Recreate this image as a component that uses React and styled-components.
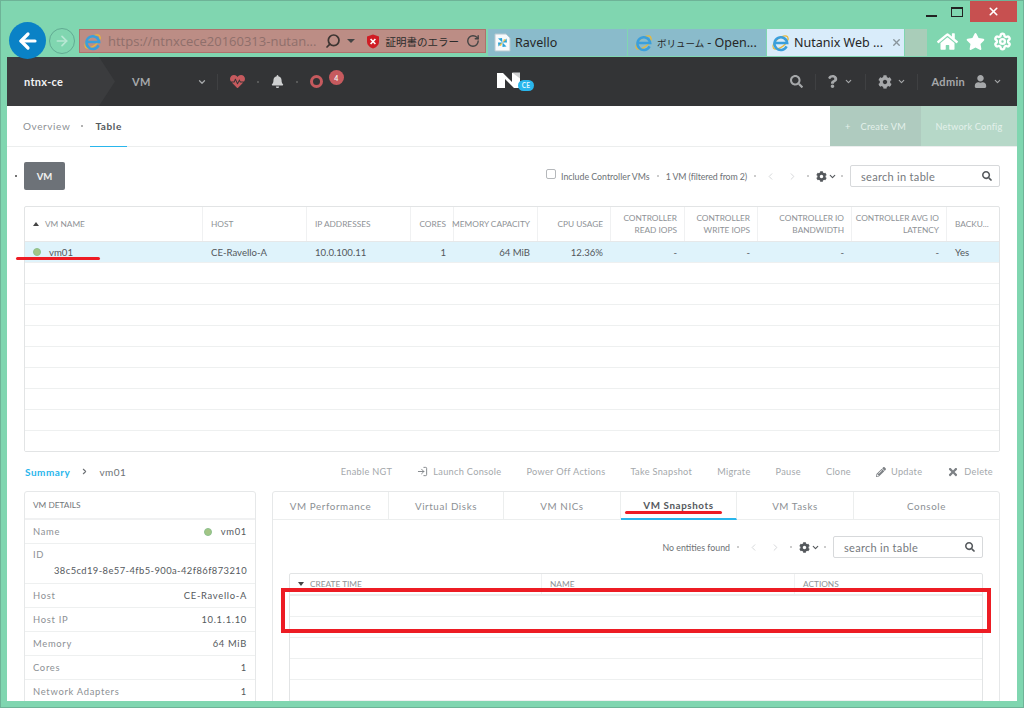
import React from "react";
import styled, { createGlobalStyle } from "styled-components";
import { FaSearch, FaQuestion, FaCog, FaUser, FaBell, FaHeartbeat, FaPencilAlt, FaTimes, FaHome, FaStar } from "react-icons/fa";
import { ChevronDown, ChevronLeft, ChevronRight, ArrowLeft, ArrowRight, RotateCw, X, LogIn, Search, Settings } from "lucide-react";

const GlobalStyle = createGlobalStyle`
  html, body { margin: 0; padding: 0; }
  body { font-family: "Lato", "Open Sans", sans-serif; background: #80d6b0; }
  * { box-sizing: border-box; }
`;

const Frame = styled.div`
  position: relative;
  width: 1024px;
  height: 708px;
  background: #80d6b0;
  border: 1px solid #6eb397;
  overflow: hidden;
`;
const Chrome = styled.div`
  height: 56px;
`;
const WindowButtons = styled.div`
  height: 21px;
  display: flex;
  justify-content: flex-end;
  align-items: stretch;
  padding-right: 6px;
`;
const WinButton = styled.div`
  width: ${props => props.$close ? "47px" : "26px"};
  background: ${props => props.$close ? "#c75050" : "transparent"};
  color: #fff;
  display: flex;
  align-items: center;
  justify-content: center;
`;
const MinGlyph = styled.span`
  width: 11px;
  height: 2px;
  background: #222;
  margin-top: 8px;
`;
const MaxGlyph = styled.span`
  width: 12px;
  height: 10px;
  border: 1px solid #222;
  border-top-width: 2px;
`;
const NavRow = styled.div`
  height: 35px;
  display: flex;
  align-items: flex-start;
  padding-left: 8px;
`;
const BackButton = styled.div`
  width: 37px;
  height: 37px;
  flex-shrink: 0;
  border-radius: 50%;
  background: #0a82c6;
  color: #fff;
  display: flex;
  align-items: center;
  justify-content: center;
  z-index: 2;
`;
const ForwardButton = styled.div`
  width: 26px;
  height: 26px;
  flex-shrink: 0;
  margin: 6px 4px 0 3px;
  border-radius: 50%;
  border: 1px solid #62ab93;
  color: #b8e8d4;
  display: flex;
  align-items: center;
  justify-content: center;
`;
const AddressBar = styled.div`
  width: 407px;
  height: 24px;
  margin-top: 7px;
  display: flex;
  align-items: center;
  padding: 0 5px 0 3px;
  background: #bc8d85;
  border: 1px solid #b0716c;
  color: #8f6f6b;
  font-family: "Open Sans", sans-serif;
  font-size: 13px;
  white-space: nowrap;
`;
const Url = styled.span`
  margin-left: 6px;
  width: 218px;
  overflow: hidden;
`;
const MirrorSearch = styled(Search)`
  flex-shrink: 0;
  color: #3d3532;
  transform: scaleX(-1);
`;
const CertText = styled.span`
  font-family: "Noto Sans CJK JP", sans-serif;
  font-size: 10.5px;
  color: #2b2b2b;
  margin: 0 7px 0 6px;
`;
const Caret = styled.span`
  width: 0;
  height: 0;
  margin: 0 11px 0 6px;
  border: 4px solid transparent;
  border-top: 4px solid #444;
  border-bottom: 0;
`;
const Tabs = styled.div`
  display: flex;
  height: 27px;
  margin-top: 7px;
  margin-left: 2px;
  gap: 1px;
`;
const BrowserTab = styled.div`
  width: ${props => props.$width}px;
  display: flex;
  align-items: center;
  gap: 4px;
  padding-left: ${props => props.$active ? "4px" : "6px"};
  background: ${props => props.$active ? "#d9ecfa" : "#8abbcb"};
  color: #262626;
  font-family: "Noto Sans", "Noto Sans CJK JP", sans-serif;
  font-size: 12.5px;
  white-space: nowrap;
`;
const TabCjk = styled.span`
  font-size: 9.5px;
  margin-right: 3px;
`;
const TabClose = styled.span`
  display: flex;
  margin-left: 4px;
  color: #8a959c;
`;
const NewTab = styled.div`
  width: 22px;
  background: #a9cdb9;
`;
const BrowserTools = styled.div`
  display: flex;
  align-items: center;
  gap: 8px;
  height: 27px;
  margin: 6px 0 0 10px;
  color: #fff;
`;
const Main = styled.div`
  margin: 0 6px;
  height: 644px;
  background: #fff;
  overflow: hidden;
`;
const TopBar = styled.div`
  height: 49px;
  display: flex;
  align-items: center;
  background: #333436;
  color: #a6a8aa;
  font-size: 11px;
  font-weight: 700;
  letter-spacing: .3px;
  position: relative;
`;
const ClusterName = styled.div`
  width: 108px;
  height: 100%;
  display: flex;
  align-items: center;
  padding-left: 17px;
  color: #f2f2f2;
  background: #3b3c3e;
  clip-path: polygon(0 0, 92px 0, 108px 50%, 92px 100%, 0 100%);
`;
const TopGroup = styled.div`
  display: flex;
  align-items: center;
  height: 100%;
  gap: ${props => props.$gap || 0}px;
  margin-left: ${props => props.$right ? "auto" : "0"};
  padding-right: ${props => props.$right ? "15px" : "0"};
`;
const EntityMenu = styled.span`
  margin-left: 17px;
  width: 65px;
`;
const TopDivider = styled.span`
  width: 1px;
  height: 16px;
  margin: 0 ${props => props.$right}px 0 ${props => props.$left}px;
  background: #3f4042;
`;
const MenuChevron = styled(ChevronDown)`
  margin-left: 5px;
`;
const UserIcon = styled(FaUser)`
  margin: 0 1px 0 9px;
`;
const TinyDot = styled.span`
  width: 2px;
  height: 2px;
  flex-shrink: 0;
  border-radius: 50%;
  background: ${props => props.$color || "#666"};
`;
const Ring = styled.span`
  width: 13px;
  height: 13px;
  border-radius: 50%;
  border: 3px solid #c65a5e;
`;
const Badge = styled.span`
  position: absolute;
  left: 322px;
  top: 13px;
  width: 15px;
  height: 15px;
  border-radius: 50%;
  background: #c65a5e;
  color: #eee;
  font-size: 7px;
  display: flex;
  align-items: center;
  justify-content: center;
`;
const Logo = styled.div`
  position: absolute;
  left: 490px;
  top: 15px;
`;
const SubNav = styled.div`
  height: 41px;
  display: flex;
  justify-content: space-between;
  border-bottom: 1px solid #eceeee;
`;
const SubTabs = styled.div`
  display: flex;
  align-items: stretch;
  padding-left: 16px;
  font-size: 10px;
  letter-spacing: .6px;
`;
const SubTab = styled.div`
  display: flex;
  align-items: center;
  padding: 0 ${props => props.$active ? "5px" : "0"};
  margin-left: ${props => props.$active ? "7px" : "0"};
  color: ${props => props.$active ? "#55595d" : "#8c9094"};
  font-weight: ${props => props.$active ? 700 : 400};
  border-bottom: 1px solid ${props => props.$active ? "#29b6ec" : "transparent"};
  margin-bottom: -1px;
`;
const SubDot = styled(TinyDot)`
  align-self: center;
  margin-left: 11px;
  background: #999;
`;
const SubActions = styled.div`
  display: flex;
`;
const SubAction = styled.div`
  width: ${props => props.$width}px;
  display: flex;
  align-items: center;
  justify-content: center;
  gap: 10px;
  background: ${props => props.$bg};
  color: #e4f1eb;
  font-size: 9.2px;
  letter-spacing: .2px;
`;
const Toolbar = styled.div`
  height: 59px;
  display: flex;
  align-items: center;
  justify-content: space-between;
  padding: 0 17px 1px 8px;
`;
const ToolbarLeft = styled.div`
  display: flex;
  align-items: center;
  gap: 7px;
`;
const EntityButton = styled.div`
  width: 41px;
  height: 28px;
  display: flex;
  align-items: center;
  justify-content: center;
  border-radius: 2px;
  background: #6d7278;
  color: #f2f2f2;
  font-size: 9.5px;
  font-weight: 700;
`;
const TableTools = styled.div`
  display: flex;
  align-items: center;
  gap: 7px;
  color: #6d7175;
  font-size: 8.8px;
  white-space: nowrap;
`;
const FilterCount = styled.span`
  letter-spacing: -.1px;
`;
const Check = styled.span`
  width: 10px;
  height: 10px;
  margin-right: -2px;
  margin-top: -4px;
  border: 1px solid #b5b8bb;
  border-radius: 2px;
`;
const Pager = styled.span`
  display: flex;
  gap: 11px;
  margin: 0 2px;
  color: #d2d4d6;
`;
const GearMenu = styled.span`
  display: flex;
  align-items: center;
  gap: 1px;
  color: #54585c;
  margin: 0 -3px 0 0;
`;
const SearchBox = styled.div`
  width: 150px;
  height: 22px;
  display: flex;
  align-items: center;
  justify-content: space-between;
  padding: 0 7px 0 10px;
  border: 1px solid #d7d9db;
  border-radius: 2px;
  color: #75797d;
  font-size: 11px;
  letter-spacing: .3px;
`;
const TableBox = styled.div`
  display: flex;
  flex-direction: column;
  height: ${props => props.$height};
  margin: ${props => props.$margin};
  border: 1px solid #e2e4e5;
  border-radius: 2px;
  overflow: hidden;
`;
const mainCols = "178px 104px 104px 43px 84px 73px 74px 73px 94px 95px 1fr";
const HeadRow = styled.div`
  display: grid;
  grid-template-columns: ${props => props.$cols};
  height: ${props => props.$height}px;
  flex-shrink: 0;
  border-bottom: ${props => props.$thick ? "2px solid #eceeee" : "1px solid #e6e8e9"};
`;
const HeadCell = styled.div`
  display: flex;
  align-items: center;
  justify-content: ${props => props.$right ? "flex-end" : "flex-start"};
  gap: 6px;
  padding: ${props => props.$right ? "0 7px 0 1px" : "0 8px"};
  border-right: 1px solid #f0f1f2;
  color: #8e9296;
  font-size: 8.3px;
  line-height: 12.5px;
  text-align: ${props => props.$right ? "right" : "left"};
  white-space: ${props => props.$nowrap ? "nowrap" : "normal"};
  &:last-child { border-right: 0; }
`;
const SortMark = styled.span`
  width: 0;
  height: 0;
  border: 3px solid transparent;
  ${props => props.$down
    ? "border-top: 4px solid #444; border-bottom: 0;"
    : "border-bottom: 4px solid #444; border-top: 0;"}
`;
const BodyRow = styled.div`
  display: grid;
  grid-template-columns: ${props => props.$cols};
  flex: 1 0 21px;
  height: 21px;
  border-bottom: 1px solid #eef0f0;
  background: ${props => props.$selected ? "#dff3fb" : "#fff"};
  &:last-child { border-bottom: 0; }
`;
const BodyCell = styled.div`
  display: flex;
  align-items: center;
  justify-content: ${props => props.$right ? "flex-end" : "flex-start"};
  gap: 8px;
  padding: 0 8px;
  color: #53575b;
  font-size: 9.6px;
  white-space: nowrap;
`;
const StatusDot = styled.span`
  width: 8px;
  height: 8px;
  border-radius: 50%;
  background: #a3c585;
  border: 1px solid #8cc08f;
`;
const DetailBar = styled.div`
  height: 39px;
  display: flex;
  align-items: center;
  justify-content: space-between;
  padding: 0 24px 0 18px;
  font-size: 10px;
  letter-spacing: .3px;
`;
const Crumbs = styled.div`
  display: flex;
  align-items: center;
  gap: 10px;
  color: #6d7175;
  letter-spacing: .5px;
`;
const CrumbLink = styled.span`
  color: #29b6ec;
  font-weight: 700;
`;
const Actions = styled.div`
  display: flex;
  align-items: center;
  gap: 25px;
  font-size: 9.2px;
`;
const ActionItem = styled.span`
  display: flex;
  align-items: center;
  gap: 5px;
  color: #a4a8ab;
  svg { color: #7d8185; }
`;
const Panels = styled.div`
  display: flex;
  gap: 16px;
  padding: 0 17px;
`;
const DetailsPanel = styled.div`
  width: 232px;
  height: 230px;
  flex-shrink: 0;
  border: 1px solid #e6e8e9;
  border-radius: 3px 3px 0 0;
`;
const DetailsTitle = styled.div`
  height: 28px;
  display: flex;
  align-items: center;
  padding-left: 8px;
  border-bottom: 2px solid #f0f1f2;
  color: #72767a;
  font-size: 8.3px;
`;
const DetailRow = styled.div`
  height: ${props => props.$tall ? 40 : 24}px;
  display: flex;
  flex-direction: ${props => props.$tall ? "column" : "row"};
  align-items: ${props => props.$tall ? "stretch" : "center"};
  justify-content: space-between;
  padding: ${props => props.$tall ? "5px 8px 7px" : "0 8px"};
  border-bottom: 1px solid #eef0f0;
  font-size: 9.4px;
  letter-spacing: .7px;
  color: #8c9094;
`;
const DetailValue = styled.span`
  display: flex;
  align-items: center;
  justify-content: flex-end;
  gap: 9px;
  color: #55595d;
  letter-spacing: ${props => props.$tight ? ".42px" : ".7px"};
`;
const TabsPanel = styled.div`
  flex: 1;
  height: 230px;
  border: 1px solid #e6e8e9;
  border-radius: 3px 3px 0 0;
`;
const PanelTabs = styled.div`
  display: grid;
  grid-template-columns: 116px 115px 117px 116px 117px 1fr;
  height: 28px;
  border-bottom: 1px solid #eceeee;
`;
const PanelTab = styled.div`
  display: flex;
  align-items: center;
  justify-content: center;
  border-right: 1px solid #eceeee;
  border-bottom: ${props => props.$active ? "2px solid #29b6ec" : "0"};
  margin-bottom: ${props => props.$active ? "-1px" : "0"};
  color: ${props => props.$active ? "#55595d" : "#8c9094"};
  font-size: 9.8px;
  font-weight: ${props => props.$active ? 700 : 400};
  letter-spacing: .6px;
  &:last-child { border-right: 0; }
`;
const PanelTools = styled.div`
  height: 53px;
  display: flex;
  justify-content: flex-end;
  align-items: center;
  padding: 1px 16px 0 0;
`;
const RedBox = styled.div`
  position: absolute;
  left: 280px;
  top: 587px;
  width: 710px;
  height: 45px;
  border: 4px solid #ed1c24;
`;
const RedLine = styled.div`
  position: absolute;
  left: ${props => props.$left}px;
  top: ${props => props.$top}px;
  width: ${props => props.$width}px;
  height: 3px;
  border-radius: 2px;
  background: #ed1c24;
`;
const IconSvg = styled.svg`
  flex-shrink: 0;
`;

function IeIcon() {
  return (
    <IconSvg width="19" height="19" viewBox="0 0 19 19">
      <ellipse cx="9.5" cy="9.5" rx="9" ry="4.4" transform="rotate(-38 9.5 9.5)" fill="none" stroke="#e8b93a" strokeWidth="1.3" />
      <path d="M15.6 13.4A6.4 6.4 0 1 1 16.2 10H4" fill="none" stroke="#3a9fdc" strokeWidth="2.5" />
    </IconSvg>
  );
}

function PinwheelIcon() {
  return (
    <IconSvg width="17" height="19" viewBox="0 0 17 19">
      <path d="M1 1h11l4 4v13H1z" fill="#f8fbfc" stroke="#b8c8d0" />
      <path d="M8.5 9.5 4 5.5l4-.5zM8.5 9.5l4-4 .5 4z" fill="#2aa3d8" />
      <path d="M8.5 9.5l4 4-4 .5zM8.5 9.5l-4 4-.5-4z" fill="#2aa3d8" />
      <path d="M8.5 9.5 10 6l2 1zM8.5 9.5 7 13l-2-1z" fill="#f0c040" />
    </IconSvg>
  );
}

function CertIcon() {
  return (
    <IconSvg width="14" height="15" viewBox="0 0 14 15">
      <path d="M7 .5 13 2.5v5c0 3.5-2.6 5.8-6 7-3.4-1.2-6-3.5-6-7v-5z" fill="#d01c24" />
      <path d="M4.6 5l4.8 5M9.4 5l-4.8 5" stroke="#fff" strokeWidth="1.6" />
    </IconSvg>
  );
}

function NutanixLogo() {
  return (
    <svg width="38" height="22" viewBox="0 0 38 22">
      <path d="M0 1h6l9 9V1h8v15h-6L8 7v9H0z" fill="#fff" />
      <path d="M15 .5h8v6z" fill="#cfd0d1" />
      <rect x="21" y="8" width="16" height="11" rx="5.5" fill="#29b6ec" />
      <text x="29" y="16" textAnchor="middle" fontSize="6.5" fontWeight="700" fill="#dff5ff" fontFamily="Lato, sans-serif">CE</text>
    </svg>
  );
}

function SelectedTools({ label }) {
  return (
    <TableTools>
      {label}
      <TinyDot $color="#bbb" />
      <Pager><ChevronLeft size={11} /><ChevronRight size={11} /></Pager>
      <TinyDot $color="#bbb" />
      <GearMenu><FaCog size={11} /><ChevronDown size={9} strokeWidth={3} /></GearMenu>
      <TinyDot $color="#bbb" />
      <SearchBox>search in table<FaSearch size={10} color="#55595d" /></SearchBox>
    </TableTools>
  );
}

const heads = [
  ["VM NAME"], ["HOST"], ["IP ADDRESSES"], ["CORES", true], ["MEMORY CAPACITY", true], ["CPU USAGE", true],
  ["CONTROLLER READ IOPS", true], ["CONTROLLER WRITE IOPS", true], ["CONTROLLER IO BANDWIDTH", true], ["CONTROLLER AVG IO LATENCY", true], ["BACKU..."],
];
const details = [
  ["Host", "CE-Ravello-A"], ["Host IP", "10.1.1.10"], ["Memory", "64 MiB"], ["Cores", "1"], ["Network Adapters", "1"],
];
const panelTabs = ["VM Performance", "Virtual Disks", "VM NICs", "VM Snapshots", "VM Tasks", "Console"];
const actions = ["Enable NGT", "Launch Console", "Power Off Actions", "Take Snapshot", "Migrate", "Pause", "Clone", "Update", "Delete"];
const actionIcons = {
  "Launch Console": <LogIn size={11} />,
  Update: <FaPencilAlt size={10} />,
  Delete: <FaTimes size={12} />,
};
const snapCols = "252px 253px 1fr";

export default function App() {
  return (
    <Frame>
      <GlobalStyle />
      <Chrome>
        <WindowButtons>
          <WinButton><MinGlyph /></WinButton>
          <WinButton><MaxGlyph /></WinButton>
          <WinButton $close><X size={13} strokeWidth={3} /></WinButton>
        </WindowButtons>
        <NavRow>
          <BackButton><ArrowLeft size={24} strokeWidth={3.2} /></BackButton>
          <ForwardButton><ArrowRight size={16} strokeWidth={2.5} /></ForwardButton>
          <AddressBar>
            <IeIcon />
            <Url>https://ntnxcece20160313-nutan...</Url>
            <MirrorSearch size={16} strokeWidth={2.6} />
            <Caret />
            <CertIcon />
            <CertText>証明書のエラー</CertText>
            <RotateCw size={14} color="#444" strokeWidth={2.4} />
          </AddressBar>
          <Tabs>
            <BrowserTab $width={139}><PinwheelIcon />Ravello</BrowserTab>
            <BrowserTab $width={138}><IeIcon /><span><TabCjk>ボリューム</TabCjk>- Open...</span></BrowserTab>
            <BrowserTab $active $width={137}><IeIcon />Nutanix Web ...<TabClose><X size={11} strokeWidth={3} /></TabClose></BrowserTab>
            <NewTab />
          </Tabs>
          <BrowserTools>
            <FaHome size={21} />
            <FaStar size={19} />
            <Settings size={19} strokeWidth={3} />
          </BrowserTools>
        </NavRow>
      </Chrome>
      <Main>
        <TopBar>
          <ClusterName>ntnx-ce</ClusterName>
          <TopGroup>
            <EntityMenu>VM</EntityMenu>
            <ChevronDown size={10} strokeWidth={3} />
            <TopDivider $left={10} $right={12} />
            <TopGroup $gap={12}>
              <FaHeartbeat size={15} color="#c65a5e" />
              <TinyDot />
              <FaBell size={13} color="#cfd0d1" />
              <TinyDot />
              <Ring />
            </TopGroup>
          </TopGroup>
          <Badge>4</Badge>
          <Logo><NutanixLogo /></Logo>
          <TopGroup $right>
            <FaSearch size={13} />
            <TopDivider $left={12} $right={10} />
            <FaQuestion size={13} />
            <MenuChevron size={9} strokeWidth={3} />
            <TopDivider $left={12} $right={12} />
            <FaCog size={14} />
            <MenuChevron size={9} strokeWidth={3} />
            <TopDivider $left={11} $right={14} />
            <span>Admin</span>
            <UserIcon size={13} />
            <MenuChevron size={9} strokeWidth={3} />
          </TopGroup>
        </TopBar>
        <SubNav>
          <SubTabs>
            <SubTab>Overview</SubTab>
            <SubDot />
            <SubTab $active>Table</SubTab>
          </SubTabs>
          <SubActions>
            <SubAction $width={91} $bg="#afcbbf"><span>+</span>Create VM</SubAction>
            <SubAction $width={96} $bg="#b6d8c8">Network Config</SubAction>
          </SubActions>
        </SubNav>
        <Toolbar>
          <ToolbarLeft><TinyDot $color="#444" /><EntityButton>VM</EntityButton></ToolbarLeft>
          <SelectedTools
            label={<><Check />Include Controller VMs<TinyDot $color="#bbb" /><FilterCount>1 VM (filtered from 2)</FilterCount></>}
          />
        </Toolbar>
        <TableBox $height="246px" $margin="0 17px">
          <HeadRow $cols={mainCols} $height={35}>
            {heads.map(([text, right], i) => (
              <HeadCell key={text} $right={right} $nowrap={text === "MEMORY CAPACITY"}>
                {i === 0 && <SortMark />}{text}
              </HeadCell>
            ))}
          </HeadRow>
          <BodyRow $cols={mainCols} $selected>
            <BodyCell><StatusDot />vm01</BodyCell>
            <BodyCell>CE-Ravello-A</BodyCell>
            <BodyCell>10.0.100.11</BodyCell>
            <BodyCell $right>1</BodyCell>
            <BodyCell $right>64 MiB</BodyCell>
            <BodyCell $right>12.36%</BodyCell>
            <BodyCell $right>-</BodyCell>
            <BodyCell $right>-</BodyCell>
            <BodyCell $right>-</BodyCell>
            <BodyCell $right>-</BodyCell>
            <BodyCell>Yes</BodyCell>
          </BodyRow>
          {[...Array(9).keys()].map(i => <BodyRow key={i} $cols={mainCols} />)}
        </TableBox>
        <DetailBar>
          <Crumbs><CrumbLink>Summary</CrumbLink><ChevronRight size={9} strokeWidth={3} />vm01</Crumbs>
          <Actions>
            {actions.map(a => <ActionItem key={a}>{actionIcons[a]}{a}</ActionItem>)}
          </Actions>
        </DetailBar>
        <Panels>
          <DetailsPanel>
            <DetailsTitle>VM DETAILS</DetailsTitle>
            <DetailRow>Name<DetailValue><StatusDot />vm01</DetailValue></DetailRow>
            <DetailRow $tall>ID<DetailValue $tight>38c5cd19-8e57-4fb5-900a-42f86f873210</DetailValue></DetailRow>
            {details.map(([k, v]) => <DetailRow key={k}>{k}<DetailValue>{v}</DetailValue></DetailRow>)}
          </DetailsPanel>
          <TabsPanel>
            <PanelTabs>
              {panelTabs.map(t => <PanelTab key={t} $active={t === "VM Snapshots"}>{t}</PanelTab>)}
            </PanelTabs>
            <PanelTools><SelectedTools label="No entities found" /></PanelTools>
            <TableBox $height="140px" $margin="0 16px">
              <HeadRow $cols={snapCols} $height={22} $thick>
                <HeadCell><SortMark $down />CREATE TIME</HeadCell>
                <HeadCell>NAME</HeadCell>
                <HeadCell>ACTIONS</HeadCell>
              </HeadRow>
              {[...Array(6).keys()].map(i => <BodyRow key={i} $cols={snapCols} />)}
            </TableBox>
          </TabsPanel>
        </Panels>
      </Main>
      <RedLine $left={15} $top={256} $width={84} />
      <RedLine $left={624} $top={510} $width={97} />
      <RedBox />
    </Frame>
  );
}
